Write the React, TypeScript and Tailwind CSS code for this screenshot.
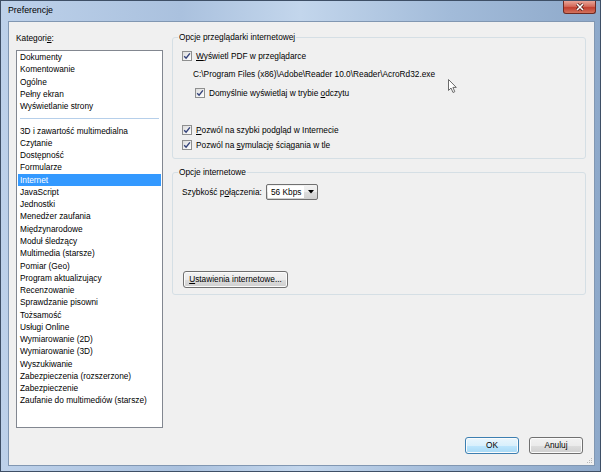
import React from "react"

const topItems = ["Dokumenty", "Komentowanie", "Ogólne", "Pełny ekran", "Wyświetlanie strony"]

const otherItems = [
  "3D i zawartość multimedialna",
  "Czytanie",
  "Dostępność",
  "Formularze",
  "Internet",
  "JavaScript",
  "Jednostki",
  "Menedżer zaufania",
  "Międzynarodowe",
  "Moduł śledzący",
  "Multimedia (starsze)",
  "Pomiar (Geo)",
  "Program aktualizujący",
  "Recenzowanie",
  "Sprawdzanie pisowni",
  "Tożsamość",
  "Usługi Online",
  "Wymiarowanie (2D)",
  "Wymiarowanie (3D)",
  "Wyszukiwanie",
  "Zabezpieczenia (rozszerzone)",
  "Zabezpieczenie",
  "Zaufanie do multimediów (starsze)",
]

const selected = "Internet"

function Checkbox() {
  return (
    <span className="flex h-[10px] w-[10px] shrink-0 items-center justify-center border border-[#8e8f8f] bg-[linear-gradient(135deg,#dcdcdc,#ffffff)]">
      <svg width="8" height="8" viewBox="0 0 8 8">
        <path d="M1.2 4.2 L3.1 6.2 L6.9 1.4" fill="none" stroke="#33427a" strokeWidth="1.4" />
      </svg>
    </span>
  )
}

function CheckRow({ children, className = "" }: { children: React.ReactNode; className?: string }) {
  return (
    <div className={`flex h-[12px] items-center gap-[4px] ${className}`}>
      <Checkbox />
      <span className="leading-[12px]">{children}</span>
    </div>
  )
}

function Button({ children, primary = false, className = "" }: { children: React.ReactNode; primary?: boolean; className?: string }) {
  const look = primary
    ? "border-[#3c7fb1] bg-[linear-gradient(180deg,#eaf6fd_0%,#d9f0fc_50%,#bee6fd_51%,#a7d9f5_100%)]"
    : "border-[#707070] bg-[linear-gradient(180deg,#f2f2f2_0%,#ebebeb_50%,#dddddd_51%,#cfcfcf_100%)]"
  return (
    <div
      className={`flex h-[17px] items-center justify-center rounded-[3px] border shadow-[inset_0_0_0_1px_#fbfbfb] ${look} ${className}`}
    >
      {children}
    </div>
  )
}

export default function App() {
  return (
    <div className="relative flex h-[472px] w-[601px] flex-col overflow-hidden border border-[#3e4f66] bg-[linear-gradient(90deg,#bdd1ea_0%,#aac1de_30%,#c3d6ec_50%,#a2bbd9_75%,#8ea9ca_100%)] font-['Liberation_Sans',Arial,sans-serif] text-[8.3px] text-black">
      {/* title bar */}
      <div className="flex h-[20px] shrink-0 items-center justify-between pl-[7px] pr-[4px]">
        <span className="text-[8.8px]">Preferencje</span>
        <div className="flex h-[13px] w-[33px] self-start items-center justify-center rounded-b-[3px] border border-t-0 border-[#6e2a22] bg-[linear-gradient(180deg,#e9a598_0%,#d46a5a_45%,#c23f2f_55%,#d2735e_100%)]">
          <svg width="10" height="8" viewBox="0 0 10 8">
            <path d="M2 1 L8 7 M8 1 L2 7" stroke="#4a1a14" strokeWidth="3" />
            <path d="M2 1 L8 7 M8 1 L2 7" stroke="#ffffff" strokeWidth="1.6" />
          </svg>
        </div>
      </div>

      {/* client area */}
      <div className="relative mb-[5px] ml-[7px] mr-[5px] flex flex-1 flex-col border border-[#8197b2] bg-[#f0f0f0]">
        <div className="flex gap-[9px] pl-[7px] pr-[8px] pt-[10px]">
          {/* categories */}
          <div className="flex w-[147px] shrink-0 flex-col">
            <div className="mb-[6px] h-[12px] leading-[12px]">
              Kategori<u>e</u>:
            </div>
            <div className="h-[378px] border border-[#828790] bg-white px-[1px]">
              {topItems.map((t) => (
                <div key={t} className="h-[12.28px] px-[2px] leading-[12.28px]">
                  {t}
                </div>
              ))}
              <div className="flex h-[12.28px] items-center px-[2px]">
                <div className="h-[1px] w-[139px] bg-[#b6cfea]" />
              </div>
              {otherItems.map((t) => (
                <div
                  key={t}
                  className={`h-[12.28px] px-[2px] leading-[12.28px] ${t === selected ? "bg-[#3399ff] text-white" : ""}`}
                >
                  {t}
                </div>
              ))}
            </div>
          </div>

          {/* settings */}
          <div className="-mt-[1px] flex flex-1 flex-col">
            <fieldset className="rounded-[3px] border border-[#d5dfe5] pb-[7px]">
              <legend className="ml-[5px] h-[12px] px-[1px] leading-[12px]">Opcje przeglądarki internetowej</legend>
              <CheckRow className="ml-[9px] mt-[7px]">
                <u>W</u>yświetl PDF w przeglądarce
              </CheckRow>
              <div className="ml-[20px] mt-[6px] h-[12px] leading-[12px]">
                C:\Program Files (x86)\Adobe\Reader 10.0\Reader\AcroRd32.exe
              </div>
              <CheckRow className="ml-[22px] mt-[7px]">
                Domyślnie wyświetlaj w trybie <u>o</u>dczytu
              </CheckRow>
              <CheckRow className="ml-[9px] mt-[25px]">
                <u>P</u>ozwól na szybki podgląd w Internecie
              </CheckRow>
              <CheckRow className="ml-[9px] mt-[3px]">
                Pozwól na <u>s</u>ymulację ściągania w tle
              </CheckRow>
            </fieldset>

            <fieldset className="mt-[7px] rounded-[3px] border border-[#d5dfe5] pb-[6px]">
              <legend className="ml-[5px] h-[12px] px-[1px] leading-[12px]">Opcje internetowe</legend>
              <div className="ml-[9px] mt-[6px] flex h-[16px] items-center">
                <span className="w-[84px]">
                  Szybkość p<u>o</u>łączenia:
                </span>
                <div className="flex h-[16px] w-[52px] items-stretch rounded-[2px] border border-[#707070] bg-[linear-gradient(180deg,#f2f2f2_0%,#ebebeb_50%,#dddddd_51%,#cfcfcf_100%)]">
                  <div className="m-[1px] flex flex-1 items-center bg-white pl-[3px]">56 Kbps</div>
                  <div className="flex w-[12px] items-center justify-center">
                    <svg width="6" height="4" viewBox="0 0 6 4">
                      <path d="M0 0 L6 0 L3 3.5 Z" fill="#000" />
                    </svg>
                  </div>
                </div>
              </div>
              <Button className="ml-[10px] mt-[71px] w-[105px]">
                <u>U</u>stawienia internetowe...
              </Button>
            </fieldset>
          </div>
        </div>

        <div className="mt-[9px] flex justify-end gap-[10px] pr-[11px]">
          <Button primary className="w-[54px]">
            OK
          </Button>
          <Button className="w-[54px]">Anuluj</Button>
        </div>

        {/* size grip */}
        <svg className="absolute bottom-[1px] right-[1px]" width="8" height="8" viewBox="0 0 8 8">
          <g fill="#b8b8b8">
            <rect x="6" y="2" width="1" height="1" />
            <rect x="4" y="4" width="1" height="1" />
            <rect x="6" y="4" width="1" height="1" />
            <rect x="2" y="6" width="1" height="1" />
            <rect x="4" y="6" width="1" height="1" />
            <rect x="6" y="6" width="1" height="1" />
          </g>
        </svg>
      </div>

      {/* mouse pointer */}
      <svg className="absolute left-[447px] top-[78px]" width="10" height="15" viewBox="0 0 10 15">
        <path
          d="M0.5 0.5 L0.5 11.5 L3 9 L5 13.5 L6.8 12.7 L4.9 8.4 L8.3 8.4 Z"
          fill="#ffffff"
          stroke="#6b6b6b"
          strokeWidth="1"
          strokeLinejoin="round"
        />
      </svg>
    </div>
  )
}
